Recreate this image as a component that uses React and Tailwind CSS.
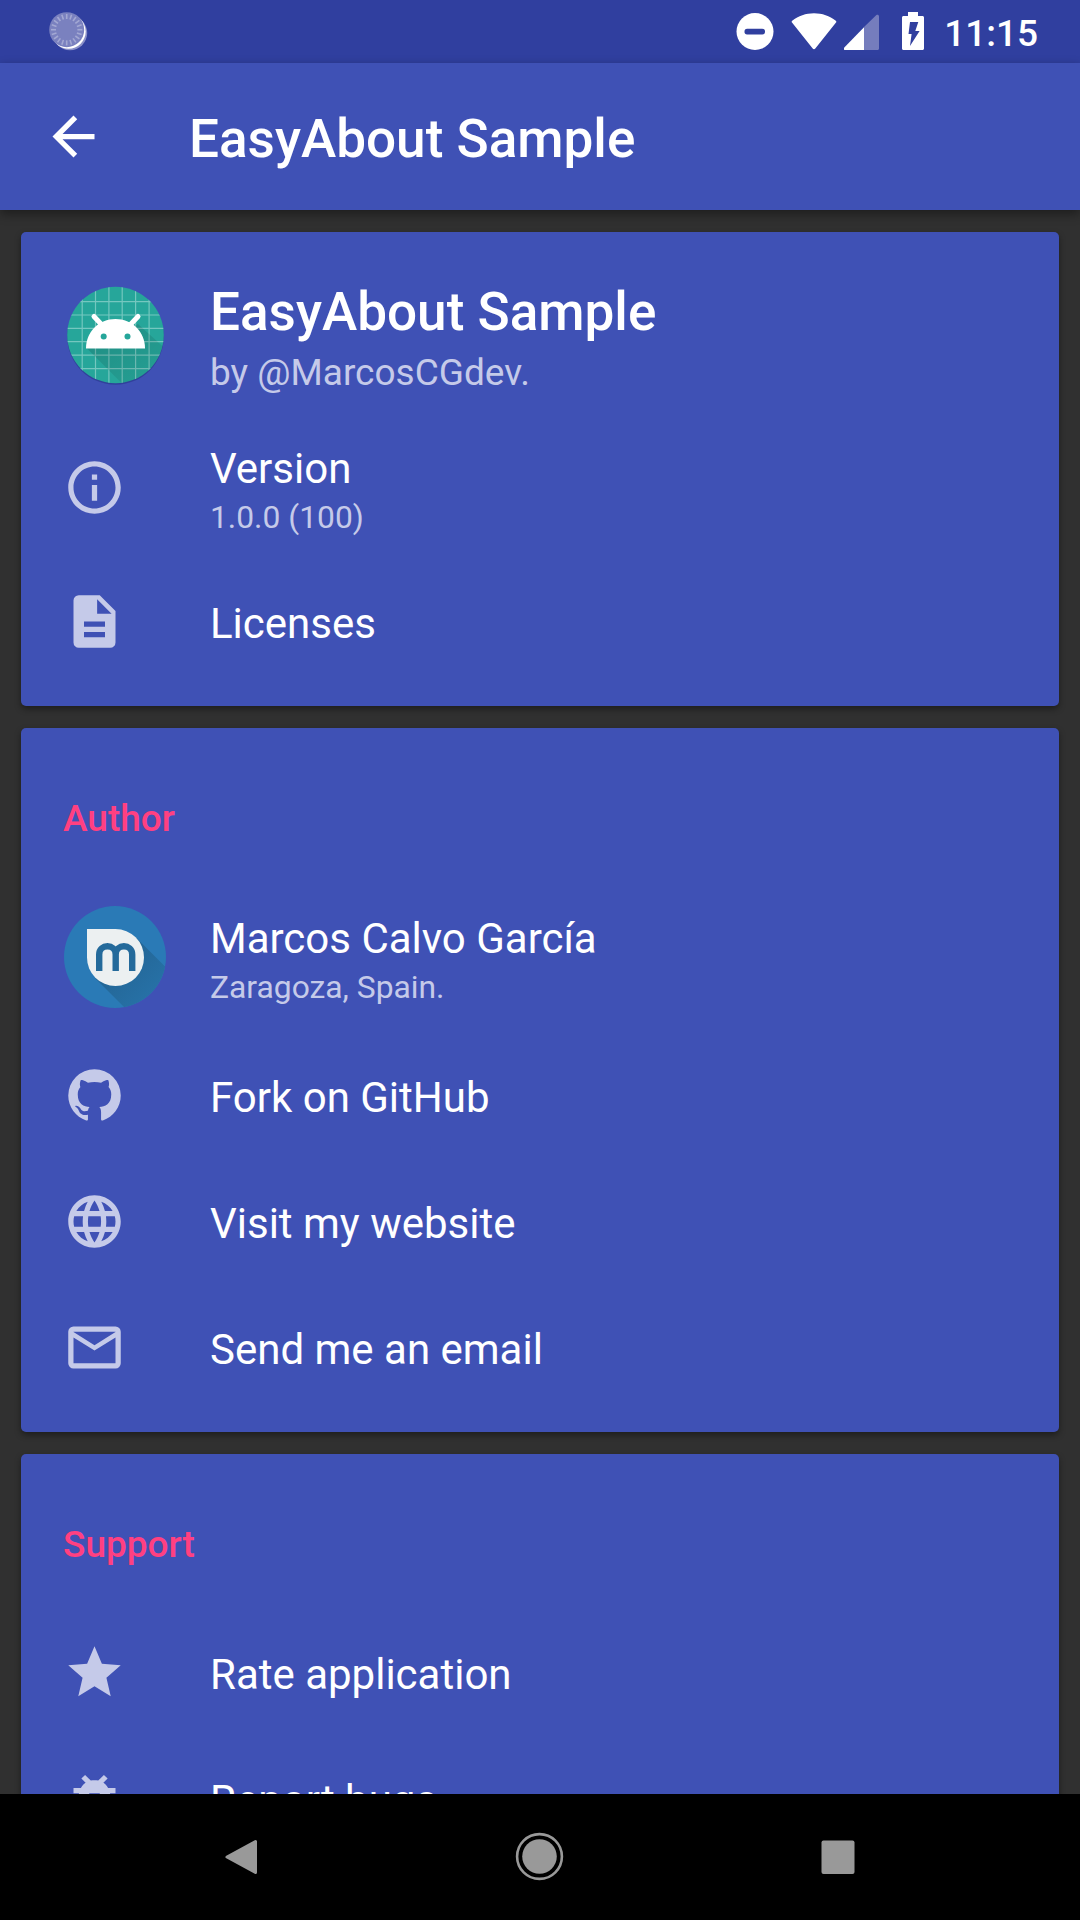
import React from "react";

const PATHS = {
  back: "M20 11H7.83l5.59-5.59L12 4l-8 8 8 8 1.41-1.41L7.83 13H20v-2z",
  info: "M11 17h2v-6h-2v6zm1-15C6.48 2 2 6.48 2 12s4.48 10 10 10 10-4.48 10-10S17.52 2 12 2zm0 18c-4.41 0-8-3.59-8-8s3.59-8 8-8 8 3.59 8 8-3.59 8-8 8zM11 9h2V7h-2v2z",
  doc: "M6 2a2 2 0 0 0-2 2v16a2 2 0 0 0 2 2h12a2 2 0 0 0 2-2V8l-6-6H6zM13 3.5L18.5 9H13V3.5zM8 12h8v2H8v-2zM8 16h8v2H8v-2z",
  github: "M12 2A10 10 0 0 0 2 12c0 4.42 2.87 8.17 6.84 9.5.5.08.66-.23.66-.5v-1.69c-2.77.6-3.36-1.34-3.36-1.34-.46-1.16-1.11-1.47-1.11-1.47-.91-.62.07-.6.07-.6 1 .07 1.53 1.03 1.53 1.03.87 1.52 2.34 1.07 2.91.83.09-.65.35-1.09.63-1.34-2.22-.25-4.55-1.11-4.55-4.92 0-1.11.38-2 1.03-2.71-.1-.25-.45-1.29.1-2.64 0 0 .84-.27 2.75 1.02.79-.22 1.65-.33 2.5-.33s1.71.11 2.5.33c1.91-1.29 2.75-1.02 2.75-1.02.55 1.35.2 2.39.1 2.64.65.71 1.03 1.6 1.03 2.71 0 3.82-2.34 4.66-4.57 4.91.36.31.69.92.69 1.85V21c0 .27.16.59.67.5C19.14 20.16 22 16.42 22 12A10 10 0 0 0 12 2z",
  web: "M11.99 2C6.47 2 2 6.48 2 12s4.47 10 9.99 10C17.52 22 22 17.52 22 12S17.52 2 11.99 2zm6.93 6h-2.95c-.32-1.25-.78-2.45-1.38-3.56 1.84.63 3.37 1.91 4.33 3.56zM12 4.04c.83 1.2 1.48 2.53 1.91 3.96h-3.82c.43-1.43 1.08-2.76 1.91-3.96zM4.26 14C4.1 13.36 4 12.69 4 12s.1-1.36.26-2h3.38c-.08.66-.14 1.32-.14 2s.06 1.34.14 2H4.26zm.82 2h2.95c.32 1.25.78 2.45 1.38 3.56-1.84-.63-3.37-1.9-4.33-3.56zm2.95-8H5.08c.96-1.66 2.49-2.93 4.33-3.56C8.81 5.55 8.35 6.75 8.03 8zM12 19.96c-.83-1.2-1.48-2.53-1.91-3.96h3.82c-.43 1.43-1.08 2.76-1.91 3.96zM14.34 14H9.66c-.09-.66-.16-1.32-.16-2s.07-1.35.16-2h4.68c.09.65.16 1.32.16 2s-.07 1.34-.16 2zm.25 5.56c.6-1.11 1.06-2.31 1.38-3.56h2.95c-.96 1.65-2.49 2.93-4.33 3.56zM16.36 14c.08-.66.14-1.32.14-2s-.06-1.34-.14-2h3.38c.16.64.26 1.31.26 2s-.1 1.36-.26 2h-3.38z",
  email: "M4 4h16a2 2 0 0 1 2 2v12a2 2 0 0 1-2 2H4a2 2 0 0 1-2-2V6a2 2 0 0 1 2-2zM4 8.2V18h16V8.2l-8 4.9zM4 6v0.1l8 5 8-5V6z",
  star: "M12 17.27L18.18 21l-1.64-7.03L22 9.24l-7.19-.61L12 2 9.19 8.63 2 9.24l5.46 4.73L5.82 21z",
  bug: "M20 8h-2.81c-.45-.78-1.07-1.45-1.82-1.96L17 4.41 15.59 3l-2.17 2.17C12.96 5.06 12.49 5 12 5c-.49 0-.96.06-1.41.17L8.41 3 7 4.41l1.62 1.63C7.88 6.55 7.26 7.22 6.81 8H4v2h2.09c-.05.33-.09.66-.09 1v1H4v2h2v1c0 .34.04.67.09 1H4v2h2.81c1.04 1.79 2.97 3 5.19 3s4.15-1.21 5.19-3H20v-2h-2.09c.05-.33.09-.66.09-1v-1h2v-2h-2v-1c0-.34-.04-.67-.09-1H20V8zm-6 8h-4v-2h4v2zm0-4h-4v-2h4v2z",
};

function Icon({ name, className = "text-[#c5cae9]" }) {
  return (
    <svg viewBox="0 0 24 24" className={`size-[63px] shrink-0 ${className}`}>
      <path d={PATHS[name]} fill="currentColor" fillRule="evenodd" />
    </svg>
  );
}

function Spinner() {
  const ticks = Array.from({ length: 20 }, (_, i) => i * 18);
  return (
    <svg viewBox="0 0 40 40" className="size-10">
      <circle cx="22" cy="21" r="17.2" fill="#8a90c8" />
      <circle cx="20.5" cy="19.5" r="17.2" fill="#fff" />
      <circle cx="18.7" cy="17.7" r="17.5" fill="#7a81bf" />
      <g stroke="#a3a8d3" strokeWidth="1.6">
        {ticks.map((a) => (
          <path key={a} d="M18.7 2v5" transform={`rotate(${a} 18.7 17.7)`} />
        ))}
      </g>
    </svg>
  );
}

function StatusBar() {
  return (
    <div className="flex h-[63px] shrink-0 items-start justify-between bg-[#303f9f] pl-12 pr-[42px] pt-3">
      <Spinner />
      <div className="flex items-start">
        <svg viewBox="0 0 38 38" className="-mr-px size-[38px]">
          <circle cx="19" cy="19.5" r="18.5" fill="#fff" />
          <rect x="8.5" y="16.8" width="20.5" height="5.6" rx="2.6" fill="#303f9f" />
        </svg>
        <svg viewBox="0 0 46 38" className="ml-[18px] h-[38px] w-[46px]">
          <path d="M1.2 8.7C7.5 3.9 14.8 1.2 23 1.2s15.5 2.7 21.8 7.5c.7.5.7 1.3.2 1.9L24.3 36.5c-.7.9-1.9.9-2.6 0L1 10.6c-.5-.6-.5-1.4.2-1.9z" fill="#fff" />
        </svg>
        <svg viewBox="0 0 36 38" className="ml-[7px] h-[38px] w-9">
          <path d="M20 15V38h13.5c.9 0 1.500-.6 1.500-1.500V4.200c0-1.500-1.700-2-2.600-1.100z" fill="#757dbd" />
          <path d="M20 15.2V38H1c-1.300 0-1.500-1.600-.7-2.500z" fill="#fff" />
        </svg>
        <svg viewBox="0 0 22 38" className="ml-[22px] h-[38px] w-[22px]">
          <path d="M6 0h10v4h4.5c.8 0 1.500.7 1.500 1.500v31c0 .8-.7 1.500-1.500 1.500h-19C.7 38 0 37.300 0 36.500v-31C0 4.700.7 4 1.500 4H6z" fill="#fff" />
          <path d="M8 10h8.300l-3 9h4.300L8 34l1.600-12H6.500z" fill="#303f9f" />
        </svg>
        <span className="ml-5 text-[37px] font-medium leading-[44px]">11:15</span>
      </div>
    </div>
  );
}

function AppLogo() {
  const lines = [-33.3, -20, -6.6, 6.7, 20.1, 33.6];
  return (
    <svg viewBox="0 0 106 106" className="-ml-0.5 size-[106px] shrink-0">
      <defs>
        <clipPath id="disc">
          <circle cx="54.5" cy="53" r="48.3" />
        </clipPath>
        <linearGradient id="cast" x1="0" y1="0" x2="1" y2="1">
          <stop offset="0" stopColor="#000" stopOpacity=".16" />
          <stop offset="1" stopColor="#000" stopOpacity="0" />
        </linearGradient>
      </defs>
      <circle cx="54.5" cy="54.5" r="48.3" fill="#28358a" opacity=".6" />
      <g clipPath="url(#disc)">
        <rect width="106" height="106" fill="#26a69a" />
        <g stroke="#74c7bf" strokeWidth="1.2">
          {lines.map((l) => (
            <path key={l} d={`M${54.5 + l} 0V106M0 ${53 + l}H106`} />
          ))}
        </g>
        <path d="M25.5 66L73 113.500H130V90L77 42z" fill="url(#cast)" />
      </g>
      <path d="M25 66.500C25 49.500 38 37 54.500 37S84 49.500 84 66.500z" fill="#fff" />
      <path d="M33 34.500l7.500 8M77 34.500l-7.500 8" stroke="#fff" strokeWidth="5" strokeLinecap="round" />
      <circle cx="42.7" cy="54.5" r="3" fill="#26a69a" />
      <circle cx="66.5" cy="54.5" r="3" fill="#26a69a" />
    </svg>
  );
}

function AuthorAvatar() {
  return (
    <svg viewBox="0 0 102 102" className="ml-px size-[102px] shrink-0">
      <defs>
        <clipPath id="avatar">
          <circle cx="51" cy="51" r="51" />
        </clipPath>
        <linearGradient id="avatarShade" x1=".2" y1=".2" x2=".8" y2=".8">
          <stop offset="0" stopColor="#236493" />
          <stop offset="1" stopColor="#2876ae" />
        </linearGradient>
      </defs>
      <g clipPath="url(#avatar)">
        <rect width="102" height="102" fill="#2a7ab6" />
        <path d="M31 72L71.500 31l50 50v41H81z" fill="url(#avatarShade)" />
      </g>
      <path d="M23 23h28.500A28.500 28.500 0 1 1 23 51.500z" fill="#ecf0f1" />
      <path d="M35.200 65V48.500c0-11 16.500-11 16.500 0V65M51.700 48.500c0-11 16.500-11 16.500 0V65" fill="none" stroke="#246a9b" strokeWidth="6.4" />
    </svg>
  );
}

function Row({ icon, title, subtitle, className = "h-[126px]" }) {
  return (
    <div className={`flex shrink-0 items-center ${className}`}>
      <div className="flex w-[147px] shrink-0">{typeof icon === "string" ? <Icon name={icon} /> : icon}</div>
      <div className={subtitle ? "pt-1.5" : "pt-1"}>
        <div className="text-[42px] leading-[49px]">{title}</div>
        {subtitle && <div className="mt-1.5 text-[31.8px] leading-[37px] text-[#c5cae9]">{subtitle}</div>}
      </div>
    </div>
  );
}

function Card({ children, className = "" }) {
  return (
    <section className={`shrink-0 rounded-[5px] bg-[#3f51b5] px-[42px] pb-[21px] shadow-[0_3px_6px_rgba(0,0,0,0.4)] ${className}`}>
      {children}
    </section>
  );
}

function Header({ children, className }) {
  return (
    <h2 className={`pt-[69px] text-[37px] font-medium leading-[43px] text-[#ff4081] ${className}`}>{children}</h2>
  );
}

export default function App() {
  return (
    <div className="flex h-[1920px] w-[1080px] flex-col overflow-hidden bg-[#303030] font-['Roboto',sans-serif] text-white">
      <StatusBar />
      <header className="z-10 flex h-[147px] shrink-0 items-center bg-[#3f51b5] pl-[42px] shadow-[0_4px_10px_rgba(0,0,0,0.4)]">
        <Icon name="back" className="text-white" />
        <h1 className="ml-[84px] pt-[5px] text-[53.1px] font-medium leading-[62px]">EasyAbout Sample</h1>
      </header>

      <main className="flex min-h-0 flex-1 flex-col gap-[22px] overflow-hidden px-[21px] pt-[22px]">
        <Card className="h-[474px] pt-[21px]">
          <div className="flex h-[163px] items-center">
            <div className="flex w-[147px] shrink-0">
              <AppLogo />
            </div>
            <div className="pt-1.5">
              <div className="text-[53.1px] font-medium leading-[62px]">EasyAbout Sample</div>
              <div className="pt-2 text-[37px] leading-[43px] text-[#c5cae9]">by @MarcosCGdev.</div>
            </div>
          </div>
          <Row icon="info" title="Version" subtitle="1.0.0 (100)" className="h-[142px]" />
          <Row icon="doc" title="Licenses" />
        </Card>

        <Card className="h-[704px]">
          <Header className="h-[154px]">Author</Header>
          <Row icon={<AuthorAvatar />} title="Marcos Calvo García" subtitle="Zaragoza, Spain." className="h-[150px]" />
          <Row icon="github" title="Fork on GitHub" />
          <Row icon="web" title="Visit my website" />
          <Row icon="email" title="Send me an email" />
        </Card>

        <Card>
          <Header className="h-[155px]">Support</Header>
          <Row icon="star" title="Rate application" />
          <Row icon="bug" title="Report bugs" />
        </Card>
      </main>

      <nav className="flex h-[126px] shrink-0 items-center justify-center gap-[236px] bg-black">
        <svg viewBox="0 0 63 63" className="size-[63px]">
          <path d="M45.500 15.500v31L17 31z" fill="#999" stroke="#999" strokeWidth="3" strokeLinejoin="round" />
        </svg>
        <svg viewBox="0 0 63 63" className="size-[63px]">
          <circle cx="30.5" cy="30.5" r="22.4" fill="none" stroke="#999" strokeWidth="2.6" />
          <circle cx="30.5" cy="30.5" r="17.3" fill="#999" />
        </svg>
        <svg viewBox="0 0 63 63" className="size-[63px]">
          <rect x="13.5" y="14.5" width="33" height="33.5" rx="2" fill="#999" />
        </svg>
      </nav>
    </div>
  );
}
